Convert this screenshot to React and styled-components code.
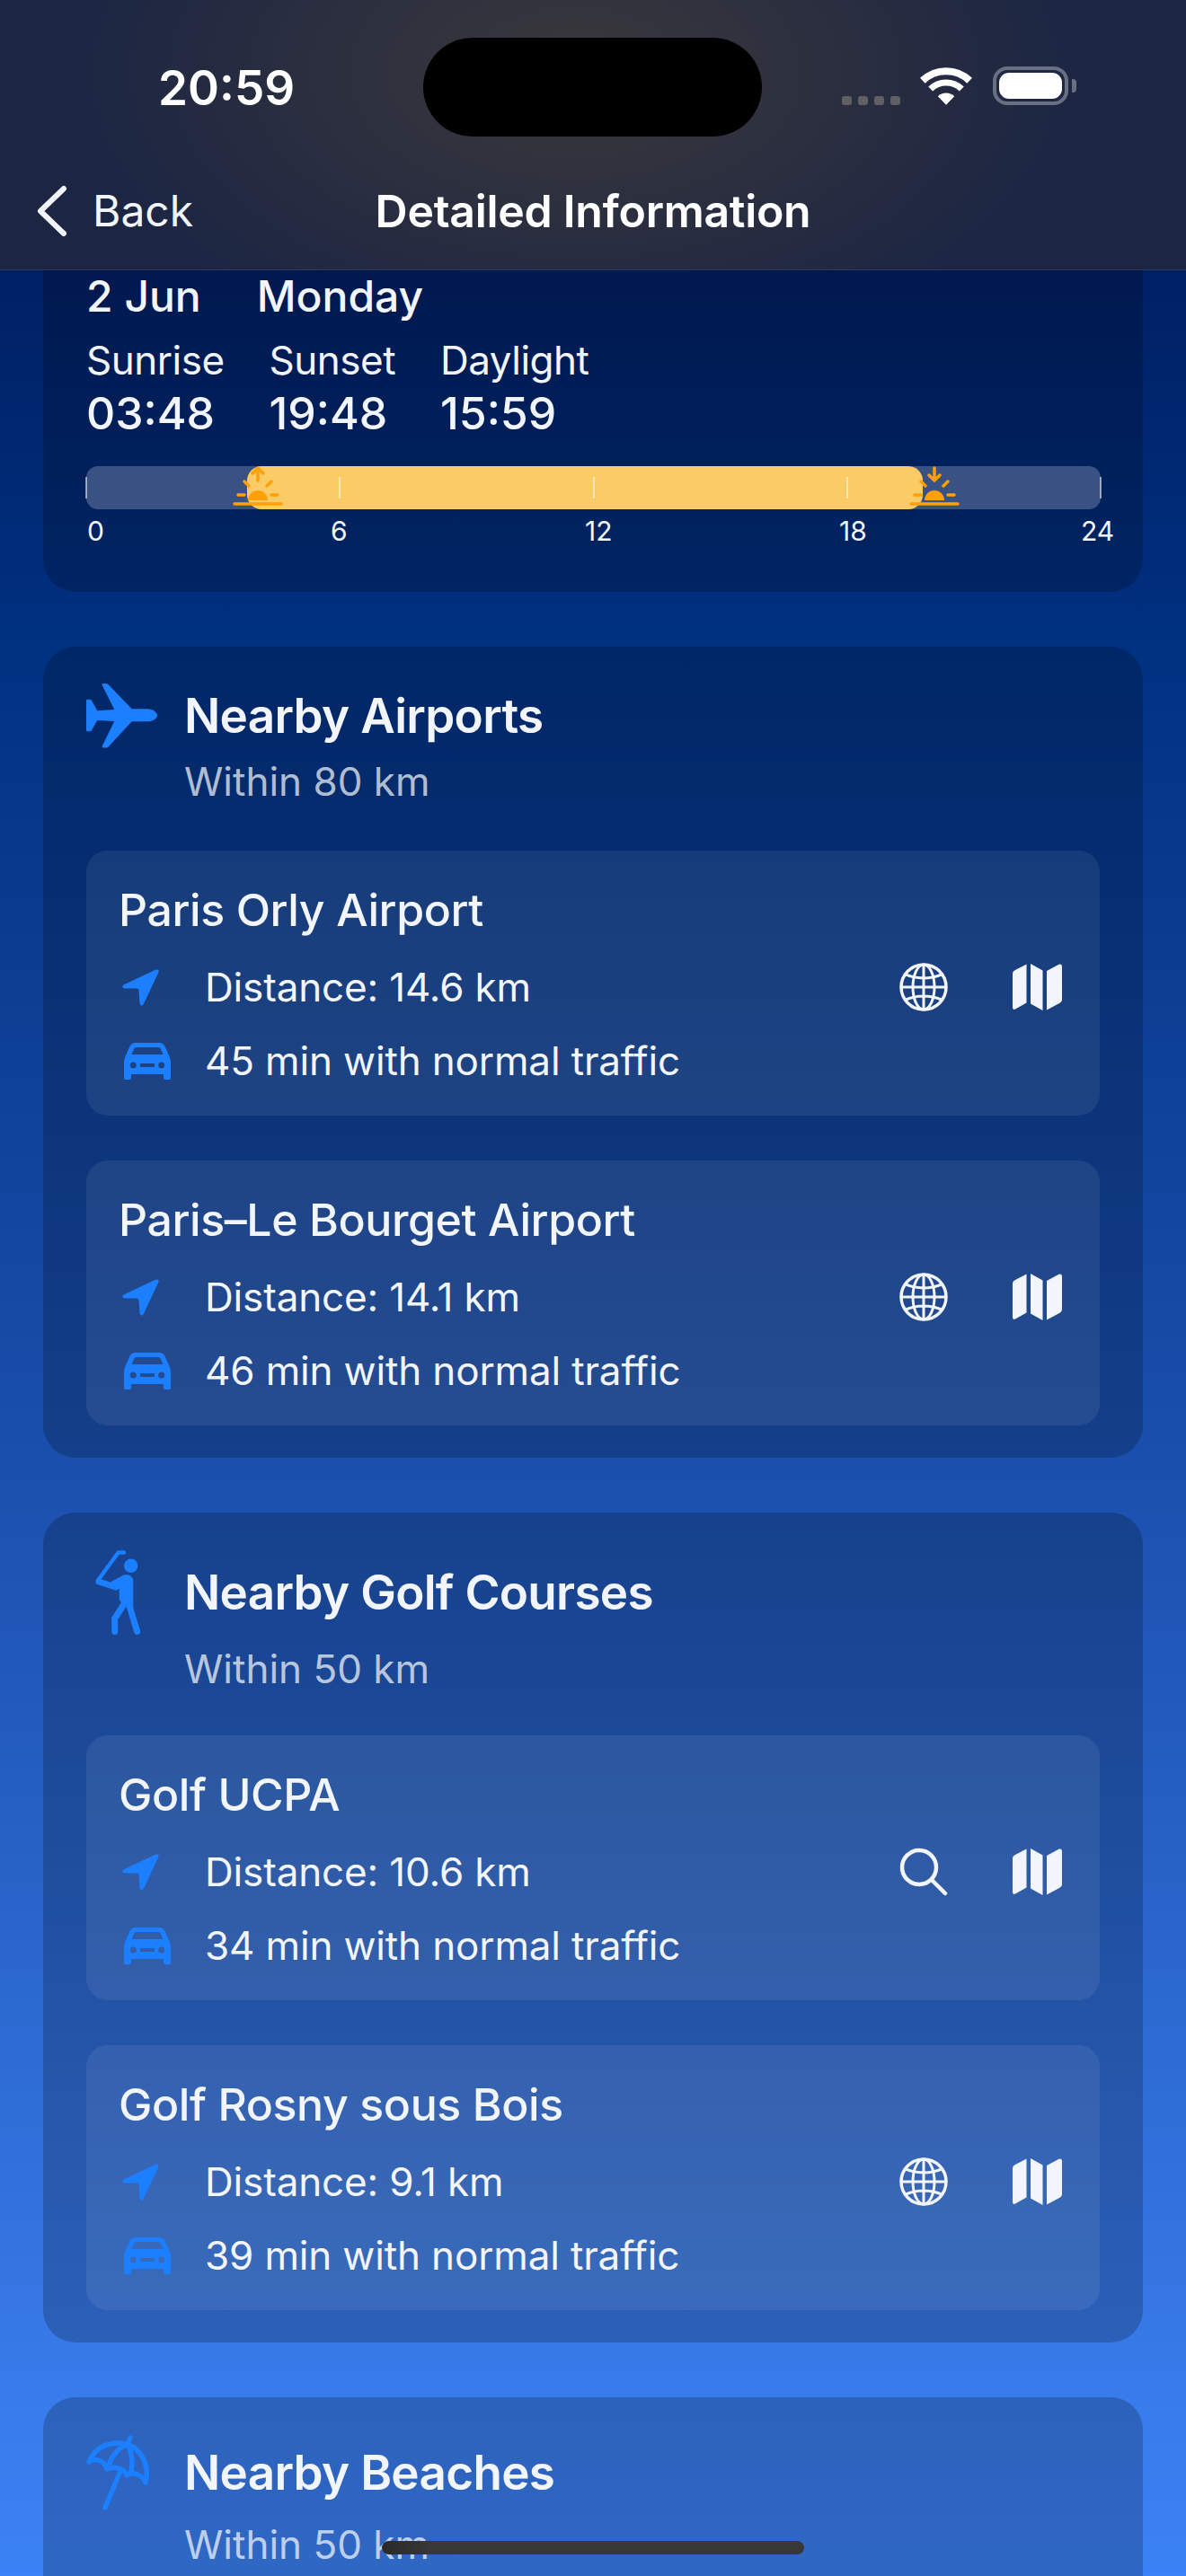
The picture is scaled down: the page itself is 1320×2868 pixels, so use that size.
import styled, { createGlobalStyle } from "styled-components";

const GlobalStyle = createGlobalStyle`
  html, body {
    margin: 0;
    padding: 0;
    background: #3b82f6;
  }
  body {
    font-family: Inter, "Noto Sans", "Liberation Sans", sans-serif;
    color: #f2f5fb;
  }
`;

const Screen = styled.div`
  position: relative;
  width: 1320px;
  height: 2868px;
  overflow: hidden;
  background: linear-gradient(
    180deg,
    #00134f 0,
    #003080 700px,
    #1b50ae 1650px,
    #387ae9 2640px,
    #3b82f6 2868px
  );
`;

const Header = styled.header`
  height: 301px;
  box-sizing: border-box;
  border-bottom: 1px solid #2c3a5e;
  background:
    radial-gradient(ellipse 560px 320px at 640px 80px, rgba(62, 58, 58, 0.9), rgba(40, 40, 50, 0) 100%),
    #1c2643;
`;

const StatusBar = styled.div`
  display: flex;
  align-items: flex-start;
  height: 152px;
  box-sizing: border-box;
  padding: 42px 0 0 176px;
`;

const Clock = styled.div`
  width: 295px;
  margin-top: 24px;
  font-size: 53px;
  line-height: 64px;
  font-weight: 600;
  color: #fff;
`;

const Island = styled.div`
  width: 377px;
  height: 110px;
  border-radius: 55px;
  background: #000;
`;

const StatusIcons = styled.div`
  display: flex;
  align-items: flex-end;
  height: 42px;
  margin: 33px 0 0 89px;
`;

const Dots = styled.div`
  display: flex;
  gap: 7px;
  margin-right: 22px;
`;

const Dot = styled.span`
  width: 11px;
  height: 10px;
  border-radius: 3px;
  background: #606064;
`;

const Battery = styled.div`
  position: relative;
  width: 84px;
  height: 43px;
  box-sizing: border-box;
  margin-left: 23px;
  padding: 3px;
  border: 4px solid #6a7084;
  border-radius: 16px;
  &::after {
    content: "";
    position: absolute;
    top: 10px;
    right: -13px;
    width: 5px;
    height: 15px;
    border-radius: 0 4px 4px 0;
    background: #6a7084;
  }
`;

const BatteryLevel = styled.div`
  height: 100%;
  border-radius: 11px;
  background: #fff;
`;

const NavBar = styled.nav`
  display: grid;
  grid-template-columns: 1fr auto 1fr;
  align-items: center;
  height: 148px;
  box-sizing: border-box;
`;

const BackLink = styled.div`
  display: flex;
  align-items: center;
  gap: 27px;
  padding-left: 40px;
  margin-top: 18px;
  font-size: 48px;
  line-height: 60px;
  color: #f2f5fb;
`;

const NavTitle = styled.div`
  margin-top: 18px;
  font-size: 50px;
  line-height: 60px;
  font-weight: 600;
  letter-spacing: -0.3px;
  color: #fff;
`;

const Content = styled.main`
  display: flex;
  flex-direction: column;
  gap: 61px;
  padding: 0 48px;
`;

const Card = styled.section`
  border-radius: 36px;
  padding: 41px 48px 36px;
  background: rgba(0, 0, 0, 0.2);
`;

const SunCard = styled(Card)`
  height: 358px;
  box-sizing: border-box;
  padding-top: 0;
  border-radius: 0 0 36px 36px;
`;

const DateRow = styled.div`
  display: flex;
  gap: 62px;
  font-size: 48px;
  line-height: 58px;
  font-weight: 500;
`;

const SunStats = styled.div`
  display: flex;
  gap: 50px;
  margin-top: 13px;
`;

const SunLabel = styled.div`
  font-size: 44px;
  line-height: 58px;
  letter-spacing: -0.5px;
`;

const SunValue = styled.div`
  font-size: 50px;
  line-height: 60px;
  font-weight: 500;
`;

const DayBar = styled.div`
  position: relative;
  width: 1129px;
  height: 48px;
  margin-top: 29px;
  border-radius: 13px;
  background: #3a5184;
`;

const DayFill = styled.div`
  position: absolute;
  top: 0;
  bottom: 0;
  border-radius: 16px;
  background: #fbcb65;
`;

const HourTick = styled.span`
  position: absolute;
  top: 12px;
  width: 2px;
  height: 24px;
  margin-left: -1px;
  background: rgba(255, 255, 255, 0.55);
`;

const SunMark = styled.svg`
  position: absolute;
  top: 0;
  width: 56px;
  height: 48px;
  margin-left: -28px;
`;

const HourLabels = styled.div`
  display: grid;
  grid-template-columns: 271px 283px 283px 269px auto;
  margin-top: 6px;
  padding-left: 1px;
  font-size: 30px;
  line-height: 36px;
`;

const CardHead = styled.div`
  display: flex;
  align-items: center;
`;

const HeadIcon = styled.div`
  display: flex;
  width: 109px;
  flex-shrink: 0;
`;

const CardTitle = styled.h2`
  margin: 0;
  font-size: 53px;
  line-height: 64px;
  font-weight: 600;
  letter-spacing: -0.7px;
`;

const CardSub = styled.div`
  margin: 8px 0 ${(p) => p.$gap}px 109px;
  font-size: 44px;
  line-height: 58px;
  color: rgba(255, 255, 255, 0.7);
`;

const PlaceList = styled.div`
  display: flex;
  flex-direction: column;
  gap: 50px;
`;

const Place = styled.article`
  padding: 36px 42px 20px 36px;
  border-radius: 24px;
  background: rgba(255, 255, 255, 0.075);
`;

const PlaceName = styled.div`
  margin-bottom: 15px;
  font-size: 50px;
  line-height: 60px;
  font-weight: 450;
  letter-spacing: -0.4px;
`;

const PlaceBody = styled.div`
  display: flex;
  align-items: center;
  justify-content: space-between;
`;

const PlaceRow = styled.div`
  display: flex;
  align-items: center;
  height: 82px;
  font-size: 44px;
  letter-spacing: -0.15px;
  color: #f2f5fb;
`;

const RowIcon = styled.div`
  display: flex;
  width: 96px;
  padding-left: ${(p) => p.$inset}px;
  box-sizing: border-box;
  flex-shrink: 0;
`;

const Actions = styled.div`
  display: flex;
  align-items: center;
  gap: 72px;
  margin-bottom: 82px;
`;

const HomeBar = styled.div`
  position: absolute;
  left: 425px;
  top: 2829px;
  width: 470px;
  height: 15px;
  border-radius: 8px;
  background: linear-gradient(90deg, #2a2a2a 0, #383838 12%);
`;

const BLUE = "#1c7fff";

const Wifi = () => (
  <svg width="58" height="42" viewBox="0 0 57 41" fill="none">
    <path d="M2.8 14.4A37 37 0 0 1 54.2 14.4" stroke="#fff" strokeWidth="8" />
    <path d="M11.5 23.4A24.5 24.5 0 0 1 45.5 23.4" stroke="#fff" strokeWidth="7" />
    <path d="M28.5 41L19.5 31.6A13 13 0 0 1 37.5 31.6Z" fill="#fff" />
  </svg>
);

const Chevron = () => (
  <svg width="36" height="58" viewBox="0 0 36 58" fill="none">
    <path d="M31 4L5 29L31 54" stroke="#f2f5fb" strokeWidth="6" strokeLinecap="round" strokeLinejoin="round" />
  </svg>
);

const Sun = ({ rising }) => (
  <>
    <path d="M2 42H54" stroke="#ff9f0a" strokeWidth="3.5" strokeLinecap="round" />
    <path d="M17 38A11 11 0 0 1 39 38Z" fill="#ff9f0a" />
    <path d="M13 17L18 22M43 17L38 22M6 32H13M43 32H50" stroke="#ff9f0a" strokeWidth="3.5" strokeLinecap="round" />
    {rising ? (
      <path d="M28 16V2M22 8L28 2L34 8" stroke="#ff9f0a" strokeWidth="3.5" strokeLinecap="round" strokeLinejoin="round" />
    ) : (
      <path d="M28 2V16M22 10L28 16L34 10" stroke="#ff9f0a" strokeWidth="3.5" strokeLinecap="round" strokeLinejoin="round" />
    )}
  </>
);

const Plane = () => (
  <svg width="79" height="72" viewBox="0 0 79 72" fill={BLUE}>
    <path d="M50.7 28.3H68C74 28.3 79 32 79 35.5C79 39 74 42.3 68 42.3H50.7L25 70Q24 71.5 22 71.5H19Q17 71.5 18 69L31.3 42L12.3 41L6 52Q5.5 53.3 4 53.3H1.5Q0 53.3 0 52V19Q0 17.7 1.5 17.7H4Q5.5 17.7 6 19L12.3 30.3L31.3 29L18 2.5Q17 0 19 0H22Q24 0 25 1.5Z" />
  </svg>
);

const Golfer = () => (
  <svg width="71" height="96" viewBox="-11 -1 71 96" fill="none">
    <circle cx="38.7" cy="17.3" r="7.7" fill={BLUE} />
    <path d="M2 33.5L24.7 2.5H31" stroke={BLUE} strokeWidth="4.5" strokeLinecap="round" strokeLinejoin="round" />
    <path d="M3 35L22 41" stroke={BLUE} strokeWidth="7" strokeLinecap="round" />
    <path d="M16.3 35L31.3 27.3Q41.3 26 41.3 35V65L30 62L25.7 55V43.3Z" fill={BLUE} />
    <path d="M31 60L20.7 76V90.5M37 62L45.7 90.5" stroke={BLUE} strokeWidth="7" strokeLinecap="round" strokeLinejoin="round" />
  </svg>
);

const Umbrella = () => (
  <svg width="72" height="86" viewBox="11 11 72 86" fill="none" stroke={BLUE} strokeWidth="5.5" strokeLinecap="round" strokeLinejoin="round">
    <path d="M60 15L57 22" />
    <path d="M49 52L32 93" />
    <path d="M14 42C20 26 36 18 57 22C72 28 82 46 77 65C74 56 62 52 56 57C54 50 44 46 34 50C32 42 22 36 14 42Z" />
    <path d="M37 43C41 33 48 26 57 22C62 32 63 43 61 53" />
  </svg>
);

const Arrow = () => (
  <svg width="41" height="41" viewBox="0 0 41 41" fill={BLUE}>
    <path d="M37 .8Q41.6 -.5 40.4 3.5L24 38.5Q21 43 19.5 38L18.5 23.5Q18.5 21.5 16.5 21.5H2.5Q-1.5 20 1.5 17.5Z" />
  </svg>
);

const Car = () => (
  <svg width="52" height="41" viewBox="0 0 52 41" fill={BLUE}>
    <path
      fillRule="evenodd"
      d="M13 0H39Q44 0 46 5L50 14Q52 18 52 22V39Q52 41 50 41H46Q44 41 44 39V35H8V39Q8 41 6 41H2Q0 41 0 39V22Q0 18 2 14L6 5Q8 0 13 0ZM14 5Q12 5 11 7L8.5 13H43.5L41 7Q40 5 38 5ZM10.3 21.5A3.5 3.5 0 1 0 10.3 28.5A3.5 3.5 0 1 0 10.3 21.5ZM41.7 21.5A3.5 3.5 0 1 0 41.7 28.5A3.5 3.5 0 1 0 41.7 21.5ZM18 23V27H34V23Z"
    />
  </svg>
);

const Globe = () => (
  <svg width="54" height="54" viewBox="0 0 54 54" fill="none" stroke="#f2f5fb" strokeWidth="3">
    <circle cx="27" cy="27" r="25" strokeWidth="3.5" />
    <ellipse cx="27" cy="27" rx="12" ry="25" />
    <path d="M27 2V52M2 27H52M7 13Q27 21 47 13M7 41Q27 33 47 41" />
  </svg>
);

const MapIcon = () => (
  <svg width="55" height="52" viewBox="0 0 55 52" fill="#f2f5fb">
    <path d="M15.5 0.5V43.5L3 50.5Q0 52 0 48.5V11Q0 8.5 2.5 7.3Z" />
    <path d="M20 0L33.5 7.5V52L20 44.5Z" />
    <path d="M38 8L51.5 0.8Q55 -0.5 55 3V40Q55 42.5 52.5 43.7L38 51.5Z" />
  </svg>
);

const Lens = () => (
  <svg width="54" height="54" viewBox="0 0 54 54" fill="none" stroke="#f2f5fb" strokeWidth="4.5" strokeLinecap="round">
    <circle cx="22" cy="22" r="19" />
    <path d="M36 36L51 51" />
  </svg>
);

const hourPos = (h) => `${(h / 24) * 100}%`;

const sections = [
  {
    title: "Nearby Airports",
    sub: "Within 80 km",
    subGap: 48,
    icon: <Plane />,
    places: [
      { name: "Paris Orly Airport", distance: "14.6", time: 45, link: "web" },
      { name: "Paris–Le Bourget Airport", distance: "14.1", time: 46, link: "web" },
    ],
  },
  {
    title: "Nearby Golf Courses",
    sub: "Within 50 km",
    subGap: 45,
    icon: <Golfer />,
    places: [
      { name: "Golf UCPA", distance: "10.6", time: 34, link: "search" },
      { name: "Golf Rosny sous Bois", distance: "9.1", time: 39, link: "web" },
    ],
  },
  {
    title: "Nearby Beaches",
    sub: "Within 50 km",
    subGap: 45,
    icon: <Umbrella />,
    places: [],
  },
];

const App = () => {
  const sunrise = 3.8;
  const sunset = 19.8;

  return (
    <Screen>
      <GlobalStyle />
      <Header>
        <StatusBar>
          <Clock>20:59</Clock>
          <Island />
          <StatusIcons>
            <Dots>
              <Dot />
              <Dot />
              <Dot />
              <Dot />
            </Dots>
            <Wifi />
            <Battery>
              <BatteryLevel />
            </Battery>
          </StatusIcons>
        </StatusBar>
        <NavBar>
          <BackLink>
            <Chevron />
            Back
          </BackLink>
          <NavTitle>Detailed Information</NavTitle>
          <div />
        </NavBar>
      </Header>
      <Content>
        <SunCard>
          <DateRow>
            <span>2 Jun</span>
            <span>Monday</span>
          </DateRow>
          <SunStats>
            <div>
              <SunLabel>Sunrise</SunLabel>
              <SunValue>03:48</SunValue>
            </div>
            <div>
              <SunLabel>Sunset</SunLabel>
              <SunValue>19:48</SunValue>
            </div>
            <div>
              <SunLabel>Daylight</SunLabel>
              <SunValue>15:59</SunValue>
            </div>
          </SunStats>
          <DayBar>
            <DayFill style={{ left: hourPos(sunrise), right: hourPos(24 - sunset) }} />
            {[0, 6, 12, 18, 24].map((h) => (
              <HourTick key={h} style={{ left: hourPos(h) }} />
            ))}
            <SunMark viewBox="0 0 56 48" fill="none" style={{ left: `calc(${hourPos(sunrise)} + 12px)` }}>
              <Sun rising />
            </SunMark>
            <SunMark viewBox="0 0 56 48" fill="none" style={{ left: `calc(${hourPos(sunset)} + 13px)` }}>
              <Sun />
            </SunMark>
          </DayBar>
          <HourLabels>
            {[0, 6, 12, 18, 24].map((h) => (
              <span key={h}>{h}</span>
            ))}
          </HourLabels>
        </SunCard>
        {sections.map((section) => (
          <Card key={section.title}>
            <CardHead>
              <HeadIcon>{section.icon}</HeadIcon>
              <CardTitle>{section.title}</CardTitle>
            </CardHead>
            <CardSub $gap={section.subGap}>{section.sub}</CardSub>
            <PlaceList>
              {section.places.map((place) => (
                <Place key={place.name}>
                  <PlaceName>{place.name}</PlaceName>
                  <PlaceBody>
                    <div>
                      <PlaceRow>
                        <RowIcon $inset={4}>
                          <Arrow />
                        </RowIcon>
                        Distance: {place.distance} km
                      </PlaceRow>
                      <PlaceRow>
                        <RowIcon $inset={6}>
                          <Car />
                        </RowIcon>
                        {place.time} min with normal traffic
                      </PlaceRow>
                    </div>
                    <Actions>
                      {place.link === "web" ? <Globe /> : <Lens />}
                      <MapIcon />
                    </Actions>
                  </PlaceBody>
                </Place>
              ))}
            </PlaceList>
          </Card>
        ))}
      </Content>
      <HomeBar />
    </Screen>
  );
};

export default App;
